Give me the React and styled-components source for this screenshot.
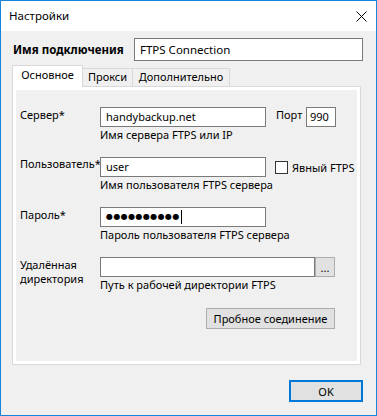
import React from "react";
import styled, { createGlobalStyle } from "styled-components";

const FONT = `"Noto Sans", "Open Sans", sans-serif`;

const Global = createGlobalStyle`
  html, body { margin: 0; padding: 0; background: #f0f0f0; }
  * { box-sizing: border-box; }
`;

const Window = styled.div`
  width: 377px;
  height: 416px;
  border: 1px solid #1883d7;
  background: #f0f0f0;
  font-family: ${FONT};
  font-size: 11px;
  color: #000;
  display: flex;
  flex-direction: column;
`;

const TitleBar = styled.div`
  height: 30px;
  background: #fff;
  display: flex;
  align-items: center;
  padding-left: 8px;
  padding-right: 9px;
  font-size: 11.5px;
`;

const Title = styled.div`
  flex: 1;
  line-height: 16px;
`;

const CloseIcon = styled.svg`
  width: 11px;
  height: 11px;
  display: block;
`;

const Main = styled.div`
  padding: 7px 0 0 11px;
  display: flex;
  flex-direction: column;
`;

const NameRow = styled.div`
  display: flex;
  align-items: center;
  height: 23px;
`;

const NameLabel = styled.div`
  width: 122px;
  font-weight: bold;
  font-size: 11.5px;
  padding-left: 1px;
  line-height: 16px;
`;

const TextBox = styled.div`
  width: ${(p) => p.$w}px;
  height: ${(p) => p.$h || 20}px;
  border: 1px solid #7a7a7a;
  background: #fff;
  display: flex;
  align-items: center;
  padding-left: ${(p) => p.$pad ?? 5}px;
  white-space: nowrap;
  overflow: hidden;
  line-height: 16px;
  font-size: ${(p) => p.$fs || 11}px;
`;

const TabStrip = styled.div`
  margin-top: 4px;
  display: flex;
  align-items: flex-end;
  height: 22px;
  margin-bottom: -1px;
  position: relative;
  z-index: 1;
`;

const Tab = styled.div`
  width: ${(p) => p.$w}px;
  height: ${(p) => (p.$active ? 22 : 19)}px;
  border: 1px solid #d9d9d9;
  border-bottom: ${(p) => (p.$active ? "none" : "1px solid #d9d9d9")};
  background: ${(p) => (p.$active ? "#fff" : "#f0f0f0")};
  margin-left: ${(p) => (p.$first ? 0 : -1)}px;
  display: flex;
  align-items: center;
  justify-content: center;
  padding-bottom: ${(p) => (p.$active ? 3 : 1)}px;
  line-height: 16px;
  white-space: nowrap;
`;

const Panel = styled.div`
  width: 349px;
  height: 279px;
  border: 1px solid #d9d9d9;
  background: #fff;
  padding: 3px;
`;

const Page = styled.div`
  height: 100%;
  background: #f0f0f0;
  padding: 17px 0 0 4px;
  display: flex;
  flex-direction: column;
  gap: 15px;
`;

const Row = styled.div`
  display: flex;
  align-items: flex-start;
`;

const FieldLabel = styled.div`
  width: 80px;
  line-height: ${(p) => p.$lh || 15}px;
  margin-top: ${(p) => p.$mt || 0}px;
  white-space: nowrap;
`;

const FieldCol = styled.div`
  display: flex;
  flex-direction: column;
`;

const Inline = styled.div`
  display: flex;
  align-items: ${(p) => p.$align || "center"};
`;

const Hint = styled.div`
  line-height: 15px;
  white-space: nowrap;
`;

const SideLabel = styled.div`
  margin-left: 10px;
  width: 30px;
  line-height: 15px;
  align-self: flex-start;
`;

const CheckWrap = styled.label`
  margin-left: 9px;
  display: flex;
  align-items: center;
  gap: 4px;
  line-height: 15px;
  white-space: nowrap;
`;

const CheckBox = styled.span`
  width: 13px;
  height: 13px;
  border: 1px solid #333;
  background: #fff;
  display: block;
  flex: none;
`;

const Dots = styled.span`
  font-family: "DejaVu Sans", sans-serif;
  font-size: 8px;
  letter-spacing: 0.4px;
  line-height: 16px;
`;

const Caret = styled.span`
  display: inline-block;
  width: 1px;
  height: 14px;
  background: #000;
  margin-left: 1px;
`;

const SmallButton = styled.div`
  width: ${(p) => p.$w}px;
  height: ${(p) => p.$h}px;
  border: 1px solid #adadad;
  background: #e1e1e1;
  display: flex;
  align-items: center;
  justify-content: center;
  line-height: 15px;
  white-space: nowrap;
`;

const ButtonRow = styled.div`
  width: 315px;
  display: flex;
  justify-content: flex-end;
  margin-top: 1px;
`;

const Footer = styled.div`
  display: flex;
  justify-content: flex-end;
  padding: 15px 13px 0 0;
`;

const OkButton = styled.div`
  width: 74px;
  height: 22px;
  border: 2px solid #0078d7;
  background: #e1e1e1;
  display: flex;
  align-items: center;
  justify-content: center;
  line-height: 15px;
`;

export default function App() {
  return (
    <>
      <Global />
      <Window>
        <TitleBar>
          <Title>Настройки</Title>
          <CloseIcon viewBox="0 0 11 11">
            <path d="M0.5 0.5 L10.5 10.5 M10.5 0.5 L0.5 10.5" stroke="#000" strokeWidth="1" fill="none" />
          </CloseIcon>
        </TitleBar>
        <Main>
          <NameRow>
            <NameLabel>Имя подключения</NameLabel>
            <TextBox $w={229} $h={23} $fs={11.5}>FTPS Connection</TextBox>
          </NameRow>
          <TabStrip>
            <Tab $w={71} $active $first>Основное</Tab>
            <Tab $w={51}>Прокси</Tab>
            <Tab $w={98}>Дополнительно</Tab>
          </TabStrip>
          <Panel>
            <Page>
              <Row>
                <FieldLabel>Сервер*</FieldLabel>
                <FieldCol>
                  <Inline $align="flex-start">
                    <TextBox $w={166}>handybackup.net</TextBox>
                    <SideLabel>Порт</SideLabel>
                    <TextBox $w={30} $pad={3}>990</TextBox>
                  </Inline>
                  <Hint>Имя сервера FTPS или IP</Hint>
                </FieldCol>
              </Row>
              <Row>
                <FieldLabel $mt={-1}>Пользователь*</FieldLabel>
                <FieldCol>
                  <Inline>
                    <TextBox $w={166}>user</TextBox>
                    <CheckWrap>
                      <CheckBox />
                      Явный FTPS
                    </CheckWrap>
                  </Inline>
                  <Hint>Имя пользователя FTPS сервера</Hint>
                </FieldCol>
              </Row>
              <Row>
                <FieldLabel>Пароль*</FieldLabel>
                <FieldCol>
                  <TextBox $w={166}>
                    <Dots>●●●●●●●●●●</Dots>
                    <Caret />
                  </TextBox>
                  <Hint>Пароль пользователя FTPS сервера</Hint>
                </FieldCol>
              </Row>
              <Row>
                <FieldLabel $lh={14} $mt={1}>
                  Удалённая
                  <br />
                  директория
                </FieldLabel>
                <FieldCol>
                  <Inline>
                    <TextBox $w={215} />
                    <SmallButton $w={20} $h={20}>...</SmallButton>
                  </Inline>
                  <Hint>Путь к рабочей директории FTPS</Hint>
                </FieldCol>
              </Row>
              <ButtonRow>
                <SmallButton $w={129} $h={21}>Пробное соединение</SmallButton>
              </ButtonRow>
            </Page>
          </Panel>
          <Footer>
            <OkButton>OK</OkButton>
          </Footer>
        </Main>
      </Window>
    </>
  );
}
